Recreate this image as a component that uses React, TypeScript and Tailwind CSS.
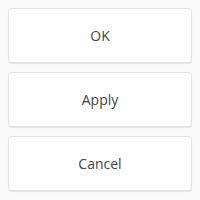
export default function App() {
  const labels = ["OK", "Apply", "Cancel"];
  return (
    <div className="w-[200px] h-[200px] bg-[#f9f9f9] p-2 flex flex-col gap-[9px] font-['Open_Sans',sans-serif]">
      {labels.map((l) => (
        <button
          key={l}
          className="h-[55px] w-full bg-white border border-[#e4e4e4] rounded-[4px] shadow-[0_1px_1px_rgba(0,0,0,0.08)] text-[14px] text-[#444]"
        >
          {l}
        </button>
      ))}
    </div>
  );
}
